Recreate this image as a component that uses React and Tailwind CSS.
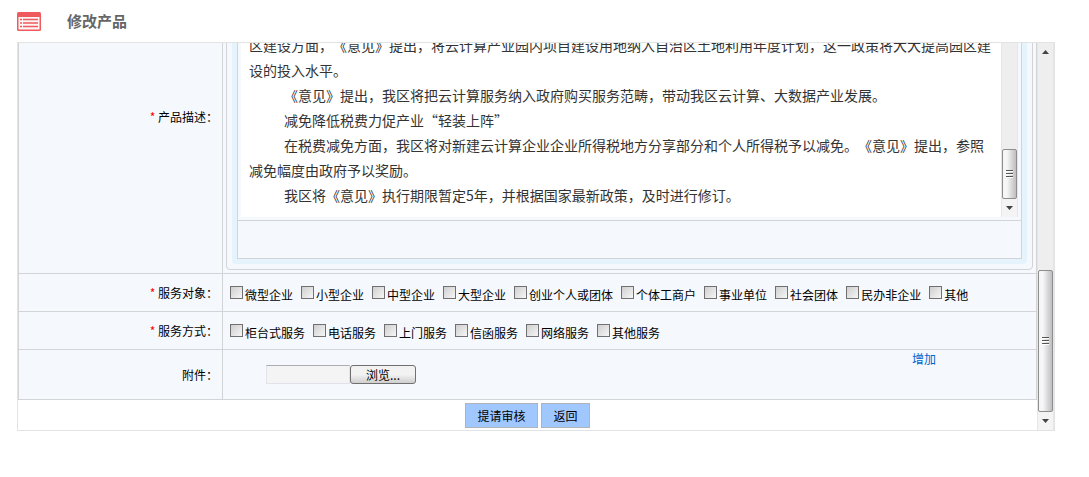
import React, { useRef, useState } from "react";

const targetOptions = [
  "微型企业",
  "小型企业",
  "中型企业",
  "大型企业",
  "创业个人或团体",
  "个体工商户",
  "事业单位",
  "社会团体",
  "民办非企业",
  "其他",
];

const methodOptions = [
  "柜台式服务",
  "电话服务",
  "上门服务",
  "信函服务",
  "网络服务",
  "其他服务",
];

const paragraphs = [
  "《意见》提出，我区将把云计算服务纳入政府购买服务范畴，带动我区云计算、大数据产业发展。",
  "减免降低税费力促产业“轻装上阵”",
  "在税费减免方面，我区将对新建云计算企业企业所得税地方分享部分和个人所得税予以减免。《意见》提出，参照减免幅度由政府予以奖励。",
  "我区将《意见》执行期限暂定5年，并根据国家最新政策，及时进行修订。",
];

const ListIcon = () => (
  <svg width="24" height="19" viewBox="0 0 24 19" aria-hidden="true">
    <rect width="24" height="19" rx="1.5" fill="#ee5a5e" />
    <rect x="1.5" y="5" width="21" height="12.5" fill="#fff4f4" />
    <path
      d="M3 7.5h2M3 11h2M3 14.5h2M6 7.5h15M6 11h15M6 14.5h15"
      stroke="#ee5a5e"
      strokeWidth="1.7"
    />
  </svg>
);

const Arrow = ({ up }) => (
  <svg width="7" height="4" viewBox="0 0 7 4" aria-hidden="true">
    <path d={up ? "M0 4h7L3.5 0z" : "M0 0h7L3.5 4z"} fill="#444" />
  </svg>
);

const ScrollBar = ({ thumbClass }) => (
  <div className="flex w-[17px] shrink-0 flex-col border-x border-[#e6e6e6] bg-[#eeeeee]">
    <button
      type="button"
      aria-label="向上"
      className="flex h-[18px] items-center justify-center"
    >
      <Arrow up />
    </button>
    <div className="flex-1" />
    <div
      className={`flex flex-col items-center justify-center gap-px rounded-xs border border-[#8e8e8e] bg-linear-to-r from-[#f6f6f6] from-30% to-[#bebec2] ${thumbClass}`}
    >
      <span className="h-0.5 w-[7px] border-b border-white bg-[#555]" />
      <span className="h-0.5 w-[7px] border-b border-white bg-[#555]" />
      <span className="h-0.5 w-[7px] border-b border-white bg-[#555]" />
    </div>
    <button
      type="button"
      aria-label="向下"
      className="flex h-[18px] items-center justify-center bg-[#f4f4f4]"
    >
      <Arrow />
    </button>
  </div>
);

const CheckList = ({ name, options }) => {
  const [selected, setSelected] = useState([]);

  const toggle = (option) => {
    if (selected.includes(option)) {
      setSelected(selected.filter((o) => o !== option));
    } else {
      setSelected([...selected, option]);
    }
  };

  return (
    <div className="flex flex-wrap gap-x-2 pt-3 pb-[7px] pl-[7px]">
      {options.map((option) => (
        <label key={option} className="flex items-start gap-0.5 leading-[18px]">
          <input
            type="checkbox"
            name={name}
            checked={selected.includes(option)}
            onChange={() => toggle(option)}
            className="size-[13px] appearance-none border border-[#707070] bg-linear-to-br from-[#cfcfcf] to-[#f6f6f6] checked:bg-[#3b78c4]"
          />
          {option}
        </label>
      ))}
    </div>
  );
};

const Row = ({ label, required, children }) => (
  <tr>
    <th
      scope="row"
      className="w-[204px] border border-[#d3d4d6] pr-1 text-right align-middle font-normal"
    >
      {required && <span className="text-[#ff0000]">* </span>}
      {label}
    </th>
    <td className="border border-[#d3d4d6] p-0 align-top">{children}</td>
  </tr>
);

const Editor = () => (
  <div className="p-[3px]">
    <div className="rounded border border-[#d3d3d6] p-[5px]">
      <div className="rounded-sm bg-[#e5f3fd] p-[5px]">
        <div className="border border-[#d3d4d6] bg-[#f5f8fd]">
          <div className="p-[3px]">
            <div className="flex h-[238px] bg-white">
              <div className="flex flex-1 flex-col justify-end overflow-hidden px-2 pb-[9px] text-sm leading-[25px] text-[#333]">
                <p>
                  区建设方面，《意见》提出，将云计算产业园内项目建设用地纳入自治区土地利用年度计划，这一政策将大大提高园区建设的投入水平。
                </p>
                {paragraphs.map((text) => (
                  <p key={text} className="indent-[35px]">
                    {text}
                  </p>
                ))}
              </div>
              <ScrollBar thumbClass="h-[50px]" />
            </div>
          </div>
          <div className="h-[38px] border-t border-[#d3d4d6]" />
        </div>
      </div>
    </div>
  </div>
);

const FileField = () => {
  const fileRef = useRef(null);
  const [fileName, setFileName] = useState("");

  return (
    <div className="flex pt-[15px]">
      <input
        ref={fileRef}
        type="file"
        hidden
        onChange={(e) => setFileName(e.target.files[0]?.name || "")}
      />
      <input
        type="text"
        readOnly
        aria-label="附件"
        value={fileName}
        className="h-[19px] w-[84px] border border-[#e2e3ea] border-t-[#abadb3] bg-[#f4f4f4] px-1"
      />
      <button
        type="button"
        onClick={() => fileRef.current.click()}
        className="h-[19px] w-[66px] rounded-[3px] border border-[#707070] bg-linear-to-b from-[#f2f2f2] from-50% to-[#cfcfcf] leading-4"
      >
        浏览...
      </button>
    </div>
  );
};

const App = () => {
  return (
    <div
      lang="zh-CN"
      className="bg-white pr-[34px] pl-[17px] font-['Noto_Sans_CJK_SC',sans-serif] text-xs text-black [text-spacing-trim:space-all]"
    >
      <header className="flex h-[42px] items-center gap-[26px]">
        <ListIcon />
        <h1 className="text-[15px] font-bold text-[#666]">修改产品</h1>
      </header>

      <form
        className="flex h-[389px] border border-[#e3e3e3]"
        onSubmit={(e) => e.preventDefault()}
      >
        <div className="flex flex-1 flex-col justify-end overflow-hidden">
          <table className="w-full shrink-0 border-collapse bg-[#f5f8fd]">
            <tbody>
              <Row label="产品描述：" required>
                <Editor />
              </Row>
              <Row label="服务对象：" required>
                <CheckList name="target" options={targetOptions} />
              </Row>
              <Row label="服务方式：" required>
                <CheckList name="method" options={methodOptions} />
              </Row>
              <Row label="附件：">
                <div className="flex h-[49px] items-start justify-between pr-[100px] pl-[43px]">
                  <FileField />
                  <a href="#add" className="leading-[18px] text-[#0066cc]">
                    增加
                  </a>
                </div>
              </Row>
            </tbody>
          </table>
          <div className="flex justify-center gap-[3px] pt-[3px] pb-0.5">
            <button
              type="submit"
              className="h-[25px] w-[73px] border border-[#b0b4ba] bg-[#a0c8ff]"
            >
              提请审核
            </button>
            <button
              type="button"
              className="h-[25px] w-[49px] border border-[#b0b4ba] bg-[#a0c8ff]"
            >
              返回
            </button>
          </div>
        </div>
        <ScrollBar thumbClass="h-[142px]" />
      </form>
    </div>
  );
};

export default App;
